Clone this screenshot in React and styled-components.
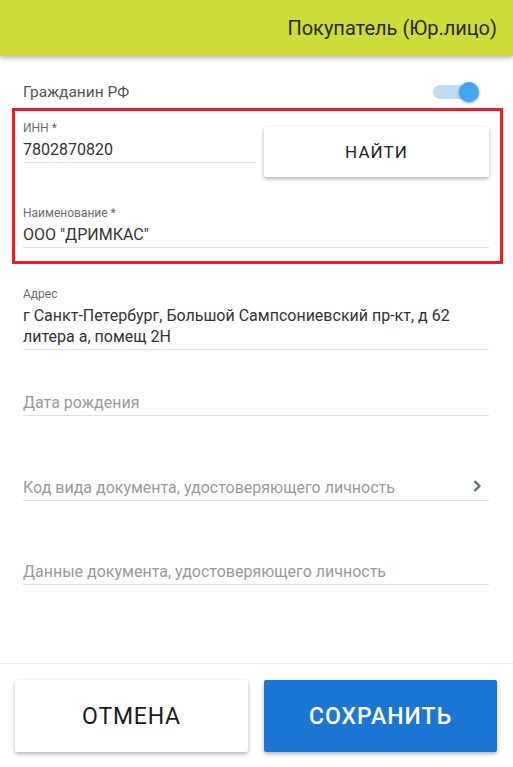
import React from "react";
import styled, { createGlobalStyle } from "styled-components";

const GlobalStyle = createGlobalStyle`
    html, body {
        margin: 0;
        padding: 0;
        background: #ffffff;
        font-family: Roboto, "Noto Sans", sans-serif;
    }
    * {
        box-sizing: border-box;
    }
`;

const Screen = styled.div`
    display: flex;
    flex-direction: column;
    height: 100vh;
    overflow: hidden;
`;

const Header = styled.header`
    height: 56px;
    flex-shrink: 0;
    display: flex;
    align-items: center;
    justify-content: flex-end;
    padding-right: 16px;
    background: #cddc39;
    color: #2a2a2a;
    font-size: 20px;
    box-shadow: 0 2px 5px rgba(0, 0, 0, 0.28);
    position: relative;
    z-index: 1;
`;

const Form = styled.main`
    flex: 1;
    padding: 0 24px 0 23px;
`;

const SwitchRow = styled.div`
    display: flex;
    align-items: center;
    justify-content: space-between;
    height: 40px;
    margin-top: 16px;
    color: #555555;
    font-size: 15.5px;
`;

const Toggle = styled.div`
    position: relative;
    width: 46px;
    height: 22px;
    margin-right: 10px;
    display: flex;
    align-items: center;
`;

const Track = styled.div`
    width: 37px;
    height: 14px;
    border-radius: 7px;
    background: #bfdcf3;
`;

const Thumb = styled.div`
    position: absolute;
    right: 0;
    top: 1px;
    width: 20px;
    height: 20px;
    border-radius: 50%;
    background: #42a5f5;
    box-shadow: 0 1px 3px rgba(0, 0, 0, 0.4);
`;

const Highlight = styled.section`
    margin: -4px -14px 0 -11px;
    padding: 9px 11px 13px 8px;
    border: 3px solid #ed1c24;
`;

const SearchRow = styled.div`
    display: flex;
    align-items: flex-start;
    gap: 8px;
`;

const Field = styled.div`
    flex: ${(props) => (props.grow ? "1" : "none")};
    margin-top: ${(props) => props.top || 0}px;
    padding-bottom: 2px;
    border-bottom: 1px solid #e2e2e2;
    display: flex;
    align-items: flex-end;
`;

const FieldBody = styled.div`
    flex: 1;
    display: flex;
    flex-direction: column;
`;

const Label = styled.span`
    font-size: 12px;
    line-height: 16px;
    color: #6d6d6d;
`;

const Value = styled.span`
    margin-top: 3px;
    font-size: 16px;
    line-height: 21px;
    color: #333333;
`;

const Placeholder = styled.span`
    font-size: 16px;
    line-height: 21px;
    color: #9a9a9a;
`;

const Chevron = styled.svg`
    width: 10px;
    height: 14px;
    margin: 0 7px 5px 0;
`;

const FindButton = styled.button`
    width: 225px;
    height: 50px;
    margin-top: 7px;
    border: none;
    border-radius: 2px;
    background: #ffffff;
    box-shadow: 0 2px 4px rgba(0, 0, 0, 0.3);
    font-family: Roboto, sans-serif;
    font-size: 17px;
    letter-spacing: 1px;
    color: #222222;
`;

const Footer = styled.footer`
    flex-shrink: 0;
    display: flex;
    gap: 16px;
    padding: 16px 16px 15px 15px;
    border-top: 1px solid #ececec;
`;

const ActionButton = styled.button`
    flex: 1;
    height: 72px;
    border: none;
    border-radius: 2px;
    background: ${(props) => (props.primary ? "#1b76d3" : "#ffffff")};
    color: ${(props) => (props.primary ? "#ffffff" : "#1a1a1a")};
    box-shadow: 0 2px 4px rgba(0, 0, 0, 0.3);
    font-family: Roboto, sans-serif;
    font-size: 23px;
    font-weight: ${(props) => (props.primary ? 500 : 400)};
    letter-spacing: ${(props) => (props.primary ? "1px" : "0.8px")};
`;

const LabeledField = ({ label, value, top, grow }) => (
    <Field top={top} grow={grow}>
        <FieldBody>
            <Label>{label}</Label>
            <Value>{value}</Value>
        </FieldBody>
    </Field>
);

const EmptyField = ({ text, top, arrow }) => (
    <Field top={top}>
        <FieldBody>
            <Placeholder>{text}</Placeholder>
        </FieldBody>
        {arrow && (
            <Chevron viewBox="0 0 10 14">
                <path
                    d="M2.5 2 L7.5 7 L2.5 12"
                    fill="none"
                    stroke="#4f6d7f"
                    strokeWidth="2.2"
                />
            </Chevron>
        )}
    </Field>
);

const App = () => {
    return (
        <Screen>
            <GlobalStyle />
            <Header>Покупатель (Юр.лицо)</Header>
            <Form>
                <SwitchRow>
                    Гражданин РФ
                    <Toggle>
                        <Track />
                        <Thumb />
                    </Toggle>
                </SwitchRow>
                <Highlight>
                    <SearchRow>
                        <LabeledField label="ИНН *" value="7802870820" grow />
                        <FindButton>НАЙТИ</FindButton>
                    </SearchRow>
                    <LabeledField
                        label="Наименование *"
                        value={'ООО "ДРИМКАС"'}
                        top={28}
                    />
                </Highlight>
                <LabeledField
                    label="Адрес"
                    value={
                        <>
                            г Санкт-Петербург, Большой Сампсониевский пр-кт, д 62
                            <br />
                            литера а, помещ 2Н
                        </>
                    }
                    top={22}
                />
                <EmptyField text="Дата рождения" top={42} />
                <EmptyField
                    text="Код вида документа, удостоверяющего личность"
                    top={61}
                    arrow
                />
                <EmptyField
                    text="Данные документа, удостоверяющего личность"
                    top={60}
                />
            </Form>
            <Footer>
                <ActionButton>ОТМЕНА</ActionButton>
                <ActionButton primary>СОХРАНИТЬ</ActionButton>
            </Footer>
        </Screen>
    );
};

export default App;
